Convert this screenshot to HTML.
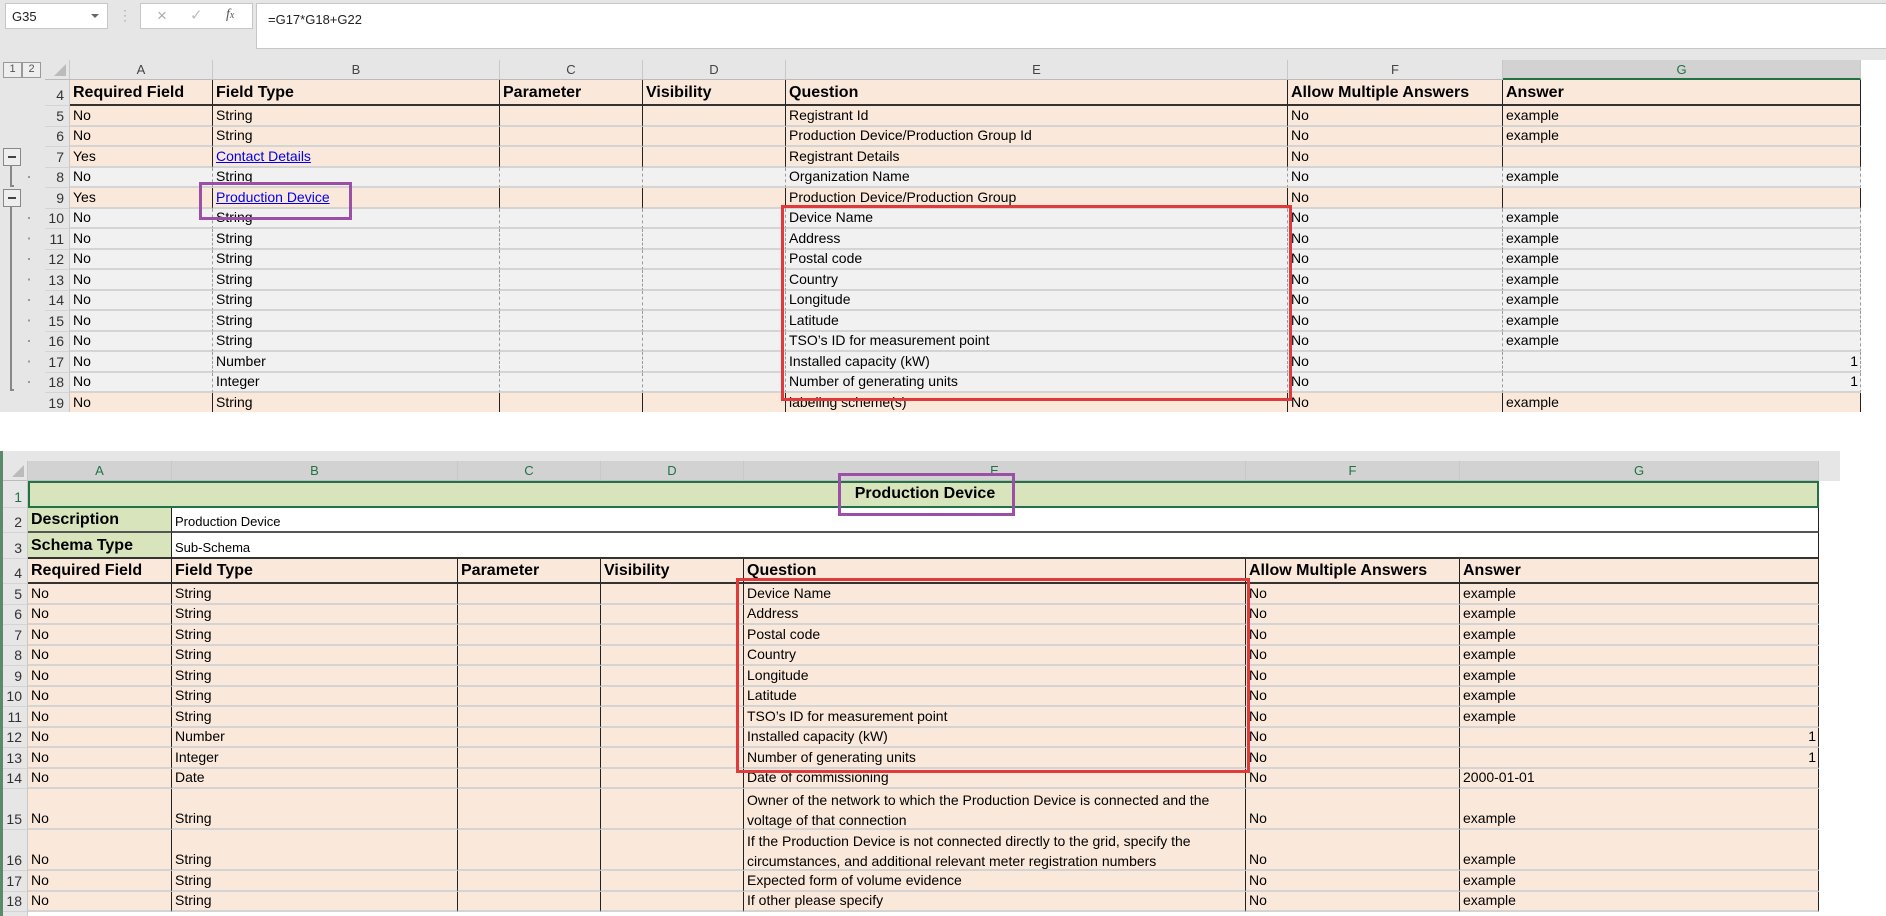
<!DOCTYPE html>
<html><head><meta charset="utf-8">
<style>
*{margin:0;padding:0;box-sizing:border-box}
body{width:1886px;height:916px;position:relative;background:#fff;font-family:"Liberation Sans",Arial,sans-serif;overflow:hidden;color:#000}
.abs{position:absolute}
.r{display:flex;position:relative}
.c{overflow:hidden;white-space:nowrap;padding:0 0 2px 3px;display:flex;align-items:flex-end;font-size:14px;border-right:1px solid #222;border-bottom:2px solid #d4d4d4;flex:none}
.h{font-weight:bold;font-size:16px;background:#f0c498;border-bottom:2px solid #333;padding-bottom:2px}
.p .c{background:#fae9da}
.g .c{background:#f1f1f1;border-right:1px dashed #999}
.rh{background:#e6e6e6!important;border-right:1px solid #c8c8c8!important;justify-content:flex-end;padding-right:5px;color:#333;font-size:14px;border-bottom:1px solid #d4d4d4!important}
.ch{background:#e6e6e6;height:20px;border-right:1px solid #c8c8c8;border-bottom:1px solid #bbb;font-size:13px;color:#444;display:flex;align-items:center;justify-content:center;flex:none}
a{color:#0000ee;text-decoration:underline}
.num{justify-content:flex-end;padding-right:2px}
</style></head><body>
<div class="abs" style="left:0;top:0;width:1886px;height:60px;background:#e6e6e6"></div>
<div class="abs" style="left:5px;top:3px;width:103px;height:26px;background:#fff;border:1px solid #c6c6c6;font-size:13px;padding:5px 0 0 6px;color:#222">G35<span style="position:absolute;right:8px;top:10px;border-left:4px solid transparent;border-right:4px solid transparent;border-top:4px solid #666"></span></div>
<div class="abs" style="left:123px;top:8px;color:#999;font-size:12px;line-height:5px">·<br>·<br>·</div>
<div class="abs" style="left:140px;top:3px;width:113px;height:26px;background:#fff;border:1px solid #c6c6c6"></div>
<div class="abs" style="left:157px;top:6px;color:#aaa;font-size:17px">×</div>
<div class="abs" style="left:190px;top:6px;color:#bbb;font-size:15px">✓</div>
<div class="abs" style="left:226px;top:7px;color:#555;font-size:14px;font-style:italic;font-family:'Liberation Serif',serif">f<span style="font-size:10px">x</span></div>
<div class="abs" style="left:256px;top:3px;width:1630px;height:46px;background:#fff;border:1px solid #c6c6c6;border-right:none;font-size:13px;padding:8px 0 0 11px;color:#222">=G17*G18+G22</div>

<div class="abs" style="left:0;top:60px;width:45px;height:352px;background:#e6e6e6"></div>
<div class="abs" style="left:3px;top:62px;width:19px;height:16px;border:1px solid #999;font-size:11px;text-align:center;color:#555;background:#eee">1</div>
<div class="abs" style="left:22px;top:62px;width:19px;height:16px;border:1px solid #999;font-size:11px;text-align:center;color:#555;background:#eee">2</div>
<div class="abs" style="left:3px;top:148px;width:18px;height:18px;border:1px solid #888;background:#eee"><div style="margin:7px 4px;height:2px;background:#444"></div></div>
<div class="abs" style="left:3px;top:189px;width:18px;height:18px;border:1px solid #888;background:#eee"><div style="margin:7px 4px;height:2px;background:#444"></div></div>
<div class="abs" style="left:10px;top:166px;width:4px;height:21px;border-left:2px solid #888;border-bottom:2px solid #888"></div>
<div class="abs" style="left:10px;top:207px;width:4px;height:184px;border-left:2px solid #888;border-bottom:2px solid #888"></div>
<div class="abs" style="left:28px;top:176px;width:2px;height:2px;background:#999;box-shadow:0 41px #999,0 61.5px #999,0 82px #999,0 102.5px #999,0 123px #999,0 143.5px #999,0 164px #999,0 184.5px #999,0 205px #999"></div>

<div class="abs" style="left:45px;top:60px;width:1841px;height:352px;overflow:hidden">
<div class="r">
<div class="ch" style="width:25px;position:relative"><span style="position:absolute;right:3px;bottom:3px;border-left:12px solid transparent;border-bottom:12px solid #bbb"></span></div>
<div class="ch" style="width:143px">A</div><div class="ch" style="width:287px">B</div><div class="ch" style="width:143px">C</div><div class="ch" style="width:143px">D</div><div class="ch" style="width:502px">E</div><div class="ch" style="width:215px">F</div><div class="ch" style="width:358px;background:#d2d2d2;border-bottom:2px solid #217346;color:#217346">G</div>
</div>
<div class="r p" style="height:26px"><div class="c rh" style="width:25px">4</div><div class="c h" style="width:143px">Required Field</div><div class="c h" style="width:287px">Field Type</div><div class="c h" style="width:143px">Parameter</div><div class="c h" style="width:143px">Visibility</div><div class="c h" style="width:502px">Question</div><div class="c h" style="width:215px">Allow Multiple Answers</div><div class="c h" style="width:358px">Answer</div></div>
<div class="r p" style="height:20.5px"><div class="c rh" style="width:25px">5</div><div class="c" style="width:143px">No</div><div class="c" style="width:287px">String</div><div class="c" style="width:143px"></div><div class="c" style="width:143px"></div><div class="c" style="width:502px">Registrant Id</div><div class="c" style="width:215px">No</div><div class="c" style="width:358px">example</div></div>
<div class="r p" style="height:20.5px"><div class="c rh" style="width:25px">6</div><div class="c" style="width:143px">No</div><div class="c" style="width:287px">String</div><div class="c" style="width:143px"></div><div class="c" style="width:143px"></div><div class="c" style="width:502px">Production Device/Production Group Id</div><div class="c" style="width:215px">No</div><div class="c" style="width:358px">example</div></div>
<div class="r p" style="height:20.5px"><div class="c rh" style="width:25px">7</div><div class="c" style="width:143px">Yes</div><div class="c" style="width:287px"><a>Contact Details</a></div><div class="c" style="width:143px"></div><div class="c" style="width:143px"></div><div class="c" style="width:502px">Registrant Details</div><div class="c" style="width:215px">No</div><div class="c" style="width:358px"></div></div>
<div class="r g" style="height:20.5px"><div class="c rh" style="width:25px">8</div><div class="c" style="width:143px">No</div><div class="c" style="width:287px">String</div><div class="c" style="width:143px"></div><div class="c" style="width:143px"></div><div class="c" style="width:502px">Organization Name</div><div class="c" style="width:215px">No</div><div class="c" style="width:358px">example</div></div>
<div class="r p" style="height:20.5px"><div class="c rh" style="width:25px">9</div><div class="c" style="width:143px">Yes</div><div class="c" style="width:287px"><a>Production Device</a></div><div class="c" style="width:143px"></div><div class="c" style="width:143px"></div><div class="c" style="width:502px">Production Device/Production Group</div><div class="c" style="width:215px">No</div><div class="c" style="width:358px"></div></div>
<div class="r g" style="height:20.5px"><div class="c rh" style="width:25px">10</div><div class="c" style="width:143px">No</div><div class="c" style="width:287px">String</div><div class="c" style="width:143px"></div><div class="c" style="width:143px"></div><div class="c" style="width:502px">Device Name</div><div class="c" style="width:215px">No</div><div class="c" style="width:358px">example</div></div>
<div class="r g" style="height:20.5px"><div class="c rh" style="width:25px">11</div><div class="c" style="width:143px">No</div><div class="c" style="width:287px">String</div><div class="c" style="width:143px"></div><div class="c" style="width:143px"></div><div class="c" style="width:502px">Address</div><div class="c" style="width:215px">No</div><div class="c" style="width:358px">example</div></div>
<div class="r g" style="height:20.5px"><div class="c rh" style="width:25px">12</div><div class="c" style="width:143px">No</div><div class="c" style="width:287px">String</div><div class="c" style="width:143px"></div><div class="c" style="width:143px"></div><div class="c" style="width:502px">Postal code</div><div class="c" style="width:215px">No</div><div class="c" style="width:358px">example</div></div>
<div class="r g" style="height:20.5px"><div class="c rh" style="width:25px">13</div><div class="c" style="width:143px">No</div><div class="c" style="width:287px">String</div><div class="c" style="width:143px"></div><div class="c" style="width:143px"></div><div class="c" style="width:502px">Country</div><div class="c" style="width:215px">No</div><div class="c" style="width:358px">example</div></div>
<div class="r g" style="height:20.5px"><div class="c rh" style="width:25px">14</div><div class="c" style="width:143px">No</div><div class="c" style="width:287px">String</div><div class="c" style="width:143px"></div><div class="c" style="width:143px"></div><div class="c" style="width:502px">Longitude</div><div class="c" style="width:215px">No</div><div class="c" style="width:358px">example</div></div>
<div class="r g" style="height:20.5px"><div class="c rh" style="width:25px">15</div><div class="c" style="width:143px">No</div><div class="c" style="width:287px">String</div><div class="c" style="width:143px"></div><div class="c" style="width:143px"></div><div class="c" style="width:502px">Latitude</div><div class="c" style="width:215px">No</div><div class="c" style="width:358px">example</div></div>
<div class="r g" style="height:20.5px"><div class="c rh" style="width:25px">16</div><div class="c" style="width:143px">No</div><div class="c" style="width:287px">String</div><div class="c" style="width:143px"></div><div class="c" style="width:143px"></div><div class="c" style="width:502px">TSO’s ID for measurement point</div><div class="c" style="width:215px">No</div><div class="c" style="width:358px">example</div></div>
<div class="r g" style="height:20.5px"><div class="c rh" style="width:25px">17</div><div class="c" style="width:143px">No</div><div class="c" style="width:287px">Number</div><div class="c" style="width:143px"></div><div class="c" style="width:143px"></div><div class="c" style="width:502px">Installed capacity (kW)</div><div class="c" style="width:215px">No</div><div class="c num" style="width:358px">1</div></div>
<div class="r g" style="height:20.5px"><div class="c rh" style="width:25px">18</div><div class="c" style="width:143px">No</div><div class="c" style="width:287px">Integer</div><div class="c" style="width:143px"></div><div class="c" style="width:143px"></div><div class="c" style="width:502px">Number of generating units</div><div class="c" style="width:215px">No</div><div class="c num" style="width:358px">1</div></div>
<div class="r p" style="height:20.5px"><div class="c rh" style="width:25px">19</div><div class="c" style="width:143px">No</div><div class="c" style="width:287px">String</div><div class="c" style="width:143px"></div><div class="c" style="width:143px"></div><div class="c" style="width:502px">labeling scheme(s)</div><div class="c" style="width:215px">No</div><div class="c" style="width:358px">example</div></div>
</div>
<div class="abs" style="left:199px;top:182px;width:153px;height:38px;border:3px solid #9b4fa6"></div>
<div class="abs" style="left:781px;top:205px;width:511px;height:196px;border:3px solid #e03a3a"></div>

<!-- bottom sheet -->
<div class="abs" style="left:0;top:451px;width:1840px;height:30px;background:#e6e6e6"></div>
<div class="abs" style="left:0;top:451px;width:28px;height:465px;background:#e6e6e6"></div>
<div class="abs" style="left:0;top:451px;width:3px;height:465px;background:#5a8a6a"></div>
<div class="abs" style="left:3px;top:461px;width:1837px;height:455px;overflow:hidden">
<div class="r">
<div class="ch" style="width:25px;position:relative;background:#e6e6e6"><span style="position:absolute;right:3px;bottom:3px;border-left:12px solid transparent;border-bottom:12px solid #bbb"></span></div>
<div class="ch" style="width:144px;background:#d2d2d2;color:#217346">A</div><div class="ch" style="width:286px;background:#d2d2d2;color:#217346">B</div><div class="ch" style="width:143px;background:#d2d2d2;color:#217346">C</div><div class="ch" style="width:143px;background:#d2d2d2;color:#217346">D</div><div class="ch" style="width:502px;background:#d2d2d2;color:#217346">E</div><div class="ch" style="width:214px;background:#d2d2d2;color:#217346">F</div><div class="ch" style="width:359px;background:#d2d2d2;color:#217346">G</div>
</div>
<div class="r" style="height:27px"><div class="c rh" style="width:25px;color:#217346">1</div><div class="c" style="width:1791px;background:#d8e4bc;border:2px solid #217346;justify-content:center;font-weight:bold;font-size:16px;padding-bottom:3px">Production Device</div></div>
<div class="r" style="height:25px"><div class="c rh" style="width:25px">2</div><div class="c" style="width:144px;background:#d8e4bc;font-weight:bold;font-size:16px;border-bottom:2px solid #555">Description</div><div class="c" style="width:1647px;background:#fff;border-bottom:2px solid #555;font-size:13px">Production Device</div></div>
<div class="r" style="height:26px"><div class="c rh" style="width:25px">3</div><div class="c" style="width:144px;background:#d8e4bc;font-weight:bold;font-size:16px;border-bottom:2px solid #333">Schema Type</div><div class="c" style="width:1647px;background:#fff;border-bottom:2px solid #333;font-size:13px">Sub-Schema</div></div>
<div class="r p" style="height:25px"><div class="c rh" style="width:25px">4</div><div class="c h" style="width:144px">Required Field</div><div class="c h" style="width:286px">Field Type</div><div class="c h" style="width:143px">Parameter</div><div class="c h" style="width:143px">Visibility</div><div class="c h" style="width:502px">Question</div><div class="c h" style="width:214px">Allow Multiple Answers</div><div class="c h" style="width:359px">Answer</div></div>
<div class="r p" style="height:20.5px"><div class="c rh" style="width:25px">5</div><div class="c" style="width:144px">No</div><div class="c" style="width:286px">String</div><div class="c" style="width:143px"></div><div class="c" style="width:143px"></div><div class="c" style="width:502px">Device Name</div><div class="c" style="width:214px">No</div><div class="c" style="width:359px">example</div></div>
<div class="r p" style="height:20.5px"><div class="c rh" style="width:25px">6</div><div class="c" style="width:144px">No</div><div class="c" style="width:286px">String</div><div class="c" style="width:143px"></div><div class="c" style="width:143px"></div><div class="c" style="width:502px">Address</div><div class="c" style="width:214px">No</div><div class="c" style="width:359px">example</div></div>
<div class="r p" style="height:20.5px"><div class="c rh" style="width:25px">7</div><div class="c" style="width:144px">No</div><div class="c" style="width:286px">String</div><div class="c" style="width:143px"></div><div class="c" style="width:143px"></div><div class="c" style="width:502px">Postal code</div><div class="c" style="width:214px">No</div><div class="c" style="width:359px">example</div></div>
<div class="r p" style="height:20.5px"><div class="c rh" style="width:25px">8</div><div class="c" style="width:144px">No</div><div class="c" style="width:286px">String</div><div class="c" style="width:143px"></div><div class="c" style="width:143px"></div><div class="c" style="width:502px">Country</div><div class="c" style="width:214px">No</div><div class="c" style="width:359px">example</div></div>
<div class="r p" style="height:20.5px"><div class="c rh" style="width:25px">9</div><div class="c" style="width:144px">No</div><div class="c" style="width:286px">String</div><div class="c" style="width:143px"></div><div class="c" style="width:143px"></div><div class="c" style="width:502px">Longitude</div><div class="c" style="width:214px">No</div><div class="c" style="width:359px">example</div></div>
<div class="r p" style="height:20.5px"><div class="c rh" style="width:25px">10</div><div class="c" style="width:144px">No</div><div class="c" style="width:286px">String</div><div class="c" style="width:143px"></div><div class="c" style="width:143px"></div><div class="c" style="width:502px">Latitude</div><div class="c" style="width:214px">No</div><div class="c" style="width:359px">example</div></div>
<div class="r p" style="height:20.5px"><div class="c rh" style="width:25px">11</div><div class="c" style="width:144px">No</div><div class="c" style="width:286px">String</div><div class="c" style="width:143px"></div><div class="c" style="width:143px"></div><div class="c" style="width:502px">TSO’s ID for measurement point</div><div class="c" style="width:214px">No</div><div class="c" style="width:359px">example</div></div>
<div class="r p" style="height:20.5px"><div class="c rh" style="width:25px">12</div><div class="c" style="width:144px">No</div><div class="c" style="width:286px">Number</div><div class="c" style="width:143px"></div><div class="c" style="width:143px"></div><div class="c" style="width:502px">Installed capacity (kW)</div><div class="c" style="width:214px">No</div><div class="c num" style="width:359px">1</div></div>
<div class="r p" style="height:20.5px"><div class="c rh" style="width:25px">13</div><div class="c" style="width:144px">No</div><div class="c" style="width:286px">Integer</div><div class="c" style="width:143px"></div><div class="c" style="width:143px"></div><div class="c" style="width:502px">Number of generating units</div><div class="c" style="width:214px">No</div><div class="c num" style="width:359px">1</div></div>
<div class="r p" style="height:20.5px"><div class="c rh" style="width:25px">14</div><div class="c" style="width:144px">No</div><div class="c" style="width:286px">Date</div><div class="c" style="width:143px"></div><div class="c" style="width:143px"></div><div class="c" style="width:502px">Date of commissioning</div><div class="c" style="width:214px">No</div><div class="c" style="width:359px">2000-01-01</div></div>
<div class="r p" style="height:41px"><div class="c rh" style="width:25px">15</div><div class="c" style="width:144px">No</div><div class="c" style="width:286px">String</div><div class="c" style="width:143px"></div><div class="c" style="width:143px"></div><div class="c" style="width:502px;line-height:20px;white-space:normal;display:block;padding-top:1px">Owner of the network to which the Production Device is connected and the voltage of that connection</div><div class="c" style="width:214px">No</div><div class="c" style="width:359px">example</div></div>
<div class="r p" style="height:41px"><div class="c rh" style="width:25px">16</div><div class="c" style="width:144px">No</div><div class="c" style="width:286px">String</div><div class="c" style="width:143px"></div><div class="c" style="width:143px"></div><div class="c" style="width:502px;line-height:20px;white-space:normal;display:block;padding-top:1px">If the Production Device is not connected directly to the grid, specify the circumstances, and additional relevant meter registration numbers</div><div class="c" style="width:214px">No</div><div class="c" style="width:359px">example</div></div>
<div class="r p" style="height:20.5px"><div class="c rh" style="width:25px">17</div><div class="c" style="width:144px">No</div><div class="c" style="width:286px">String</div><div class="c" style="width:143px"></div><div class="c" style="width:143px"></div><div class="c" style="width:502px">Expected form of volume evidence</div><div class="c" style="width:214px">No</div><div class="c" style="width:359px">example</div></div>
<div class="r p" style="height:20.5px"><div class="c rh" style="width:25px">18</div><div class="c" style="width:144px">No</div><div class="c" style="width:286px">String</div><div class="c" style="width:143px"></div><div class="c" style="width:143px"></div><div class="c" style="width:502px">If other please specify</div><div class="c" style="width:214px">No</div><div class="c" style="width:359px">example</div></div>
<div class="r" style="height:10px;background:#fff"><div class="c rh" style="width:25px"></div></div>
</div>
<div class="abs" style="left:838px;top:473px;width:177px;height:43px;border:3px solid #9b4fa6"></div>
<div class="abs" style="left:736px;top:578px;width:514px;height:195px;border:3px solid #e03a3a"></div>
</body></html>
